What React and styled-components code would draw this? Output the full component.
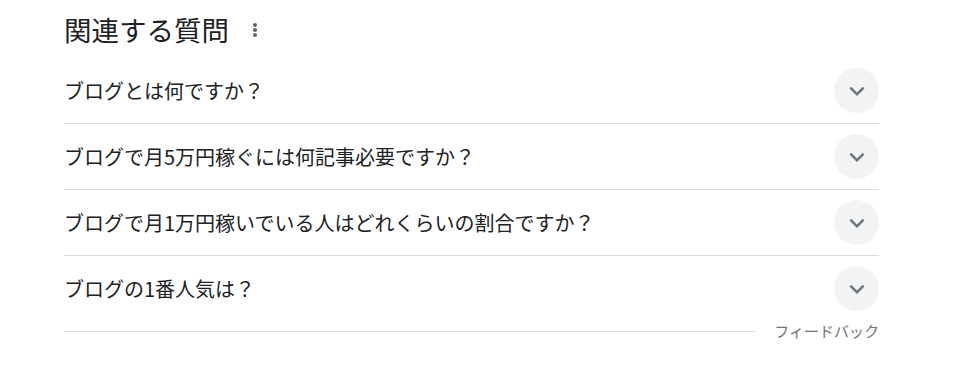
import React from "react";
import styled, { createGlobalStyle } from "styled-components";

const Global = createGlobalStyle`
  html, body { margin: 0; padding: 0; background: #fff; }
  body { font-family: "Noto Sans CJK JP", "Noto Sans", Arial, sans-serif; }
`;

const Wrap = styled.div`
  width: 815px;
  padding-left: 64px;
`;

const Header = styled.div`
  height: 57px;
  padding-bottom: 1px;
  display: flex;
  align-items: center;
`;

const Title = styled.h2`
  margin: 0;
  font-size: 27.5px;
  font-weight: 400;
  line-height: 36px;
  color: #202124;
`;

const MoreBtn = styled.span`
  display: flex;
  width: 20px;
  height: 20px;
  margin-left: 16px;
  margin-top: 3px;
`;

const Row = styled.div`
  height: 65px;
  display: flex;
  align-items: center;
  justify-content: space-between;
  border-bottom: ${(p) => (p.$last ? "none" : "1px solid #dadce0")};
`;

const Question = styled.span`
  font-size: 20px;
  line-height: 28px;
  color: #202124;
`;

const Circle = styled.span`
  width: 45px;
  height: 45px;
  border-radius: 50%;
  background: #f1f3f4;
  display: flex;
  align-items: center;
  justify-content: center;
`;

const Feedback = styled.div`
  height: 20px;
  display: flex;
  align-items: center;
`;

const Line = styled.div`
  flex: 1;
  height: 1px;
  background: #dadce0;
  margin-top: 1px;
`;

const FeedbackText = styled.span`
  margin-left: 18px;
  font-size: 15px;
  line-height: 20px;
  color: #70757a;
`;

const questions = [
  "ブログとは何ですか？",
  "ブログで月5万円稼ぐには何記事必要ですか？",
  "ブログで月1万円稼いでいる人はどれくらいの割合ですか？",
  "ブログの1番人気は？",
];

const Chevron = () => (
  <svg width="30" height="30" viewBox="0 0 24 24">
    <path d="M16.59 8.59L12 13.17 7.41 8.59 6 10l6 6 6-6z" fill="#70757a" />
  </svg>
);

const Dots = () => (
  <svg width="20" height="20" viewBox="0 0 20 20">
    <circle cx="10" cy="5" r="2" fill="#5f6368" />
    <circle cx="10" cy="10" r="2" fill="#5f6368" />
    <circle cx="10" cy="15" r="2" fill="#5f6368" />
  </svg>
);

export default function App() {
  return (
    <Wrap>
      <Global />
      <Header>
        <Title>関連する質問</Title>
        <MoreBtn>
          <Dots />
        </MoreBtn>
      </Header>
      {questions.map((q, i) => (
        <Row key={q} $last={i === questions.length - 1}>
          <Question>{q}</Question>
          <Circle>
            <Chevron />
          </Circle>
        </Row>
      ))}
      <Feedback>
        <Line />
        <FeedbackText>フィードバック</FeedbackText>
      </Feedback>
    </Wrap>
  );
}
